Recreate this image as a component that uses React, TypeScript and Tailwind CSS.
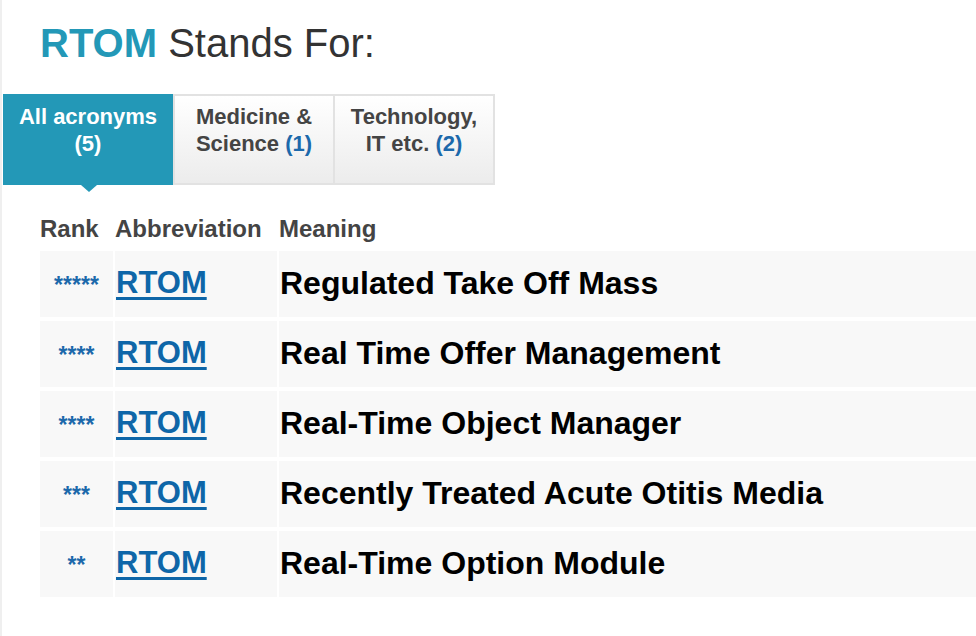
import React from 'react'

const rows = [
  { rank: '*****', abbr: 'RTOM', meaning: 'Regulated Take Off Mass' },
  { rank: '****', abbr: 'RTOM', meaning: 'Real Time Offer Management' },
  { rank: '****', abbr: 'RTOM', meaning: 'Real-Time Object Manager' },
  { rank: '***', abbr: 'RTOM', meaning: 'Recently Treated Acute Otitis Media' },
  { rank: '**', abbr: 'RTOM', meaning: 'Real-Time Option Module' },
]

export default function App() {
  return (
    <div className="min-h-screen bg-white border-l-2 border-[#efefef] font-['Liberation_Sans',Arial,sans-serif]">
      <h1 className="pl-[38px] pt-[20px] text-[40px] leading-[46px] font-normal text-[#333]">
        <span className="font-bold text-[#2398b7]">RTOM</span> Stands For:
      </h1>

      <div className="ml-px mt-[28px] flex h-[91px] text-[22px] font-bold leading-[27px]">
        <div className="relative w-[170px] bg-[#2398b7] pt-[9px] text-center text-white">
          All acronyms
          <br />
          (5)
          <div className="absolute left-[78px] top-full h-0 w-0 border-x-[8px] border-t-[7px] border-x-transparent border-t-[#2398b7]" />
        </div>
        <div className="w-[160px] border-y-2 border-l-2 border-[#e2e2e2] bg-linear-to-b from-white to-[#ececec] pt-[7px] text-center text-[#444]">
          Medicine &amp;
          <br />
          Science <span className="text-[#1c69ab]">(1)</span>
        </div>
        <div className="w-[162px] border-2 border-[#e2e2e2] bg-linear-to-b from-white to-[#ececec] pt-[7px] text-center text-[#444]">
          Technology,
          <br />
          IT etc. <span className="text-[#1c69ab]">(2)</span>
        </div>
      </div>

      <div className="pl-[38px]">
        <div className="mt-[29px] mb-[7px] grid h-[30px] grid-cols-[73px_162px_1fr] gap-x-[2px] text-[24px] font-bold leading-[30px] text-[#444]">
          <div>Rank</div>
          <div>Abbreviation</div>
          <div>Meaning</div>
        </div>

        <div className="flex flex-col gap-y-[4px]">
          {rows.map((r, i) => (
            <div
              key={i}
              className="grid h-[66px] grid-cols-[73px_162px_1fr] gap-x-[2px] text-[31px] font-bold leading-[36px]"
            >
              <div className="bg-[#f8f8f8] pt-[14px] text-center">
                <span className="text-[23px] text-[#1c69ab]">{r.rank}</span>
              </div>
              <div className="bg-[#f8f8f8] pl-[1px] pt-[14px]">
                <a href="#" className="text-[#0e66a8] underline decoration-[3px] underline-offset-[4px]">
                  {r.abbr}
                </a>
              </div>
              <div className="bg-[#f8f8f8] pl-[1px] pt-[14px] text-[32px] text-black">{r.meaning}</div>
            </div>
          ))}
        </div>
      </div>
    </div>
  )
}
